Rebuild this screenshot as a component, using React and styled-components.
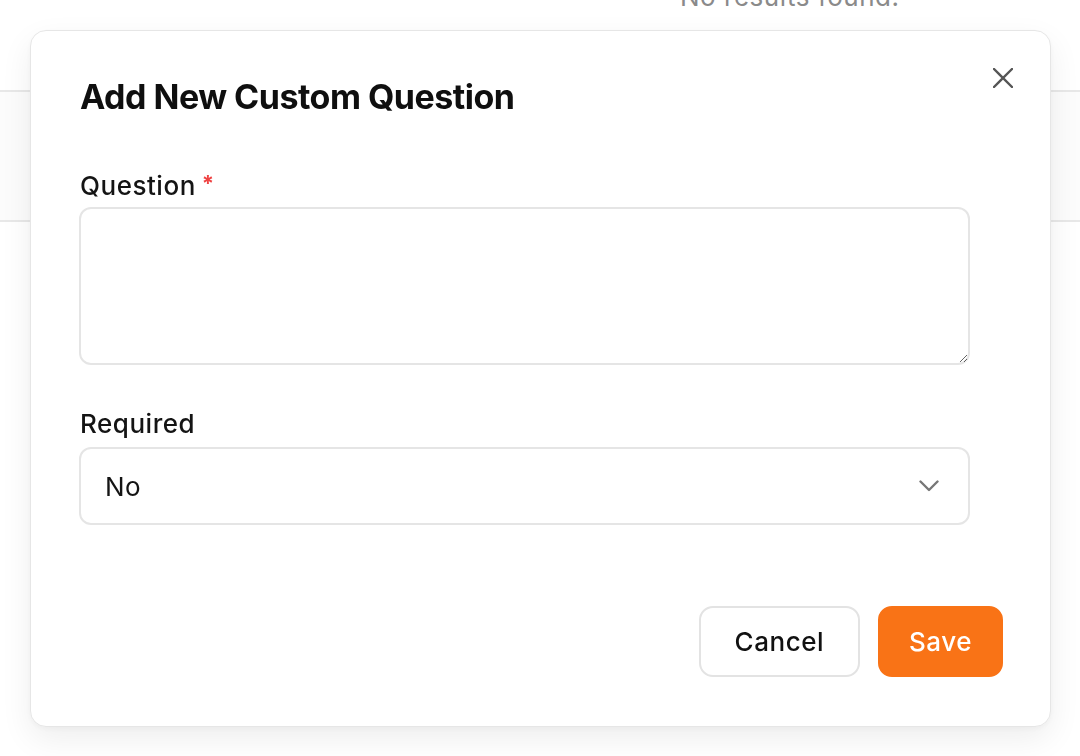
import styled, { createGlobalStyle } from "styled-components";

const GlobalStyle = createGlobalStyle`
  html, body {
    margin: 0;
    padding: 0;
    background: #ffffff;
    font-family: Inter, "Noto Sans", "Liberation Sans", sans-serif;
    color: #111111;
  }
  * {
    box-sizing: border-box;
  }
`;

const CloseIcon = () => (
  <svg width="20" height="20" viewBox="0 0 20 20" fill="none">
    <path
      d="M1 1L19 19M19 1L1 19"
      stroke="#555555"
      strokeWidth="2.4"
      strokeLinecap="round"
    />
  </svg>
);

const ChevronIcon = () => (
  <svg width="20" height="12" viewBox="0 0 20 12" fill="none">
    <path
      d="M1.5 1.5L10 10L18.5 1.5"
      stroke="#777777"
      strokeWidth="2.4"
      strokeLinecap="round"
      strokeLinejoin="round"
    />
  </svg>
);

export default function App() {
  return (
    <>
      <GlobalStyle />
      <Page>
        <Header>
          <EmptyText>No results found.</EmptyText>
        </Header>
        <Band />
      </Page>

      <Modal role="dialog" aria-labelledby="modal-title">
        <CloseButton aria-label="Close">
          <CloseIcon />
        </CloseButton>
        <Title id="modal-title">Add New Custom Question</Title>

        <Field $gap={51}>
          <Label htmlFor="question" $gap={3}>
            Question<Star>*</Star>
          </Label>
          <TextArea id="question" />
        </Field>

        <Field $gap={41}>
          <Label htmlFor="required" $gap={5}>
            Required
          </Label>
          <SelectWrap>
            <Select id="required" defaultValue="no">
              <option value="no">No</option>
              <option value="yes">Yes</option>
            </Select>
            <Chevron>
              <ChevronIcon />
            </Chevron>
          </SelectWrap>
        </Field>

        <Footer>
          <Button $pad={34}>Cancel</Button>
          <Button $pad={29} $primary>
            Save
          </Button>
        </Footer>
      </Modal>
    </>
  );
}

const Page = styled.div`
  display: flex;
  flex-direction: column;
  min-height: 756px;
`;

const Header = styled.div`
  height: 90px;
  display: flex;
  flex-direction: column;
  padding-left: 680px;
`;

const EmptyText = styled.p`
  margin: -21px 0 0;
  font-size: 26px;
  line-height: 36px;
  letter-spacing: 0.02em;
  color: #8a8a8a;
`;

const Band = styled.div`
  height: 132px;
  border-top: 2px solid #e8e8e8;
  border-bottom: 2px solid #e8e8e8;
  background: #fcfcfc;
`;

const Modal = styled.div`
  position: fixed;
  top: 30px;
  left: 30px;
  width: 1021px;
  background: #ffffff;
  border: 1px solid #e6e6e6;
  border-radius: 16px;
  box-shadow: 0 12px 32px rgba(0, 0, 0, 0.07), 0 2px 6px rgba(0, 0, 0, 0.04);
  padding: 46px 47px 49px 48px;
  display: flex;
  flex-direction: column;
`;

const CloseButton = styled.button`
  position: absolute;
  top: 37px;
  right: 37px;
  padding: 0;
  border: none;
  background: none;
  cursor: pointer;
  display: flex;
`;

const Title = styled.h2`
  margin: 0;
  padding-left: 1px;
  font-size: 34px;
  line-height: 40px;
  font-weight: 700;
  letter-spacing: -0.015em;
  color: #0f0f0f;
`;

const Field = styled.div`
  display: flex;
  flex-direction: column;
  width: 891px;
  margin-top: ${(p) => p.$gap}px;
`;

const Label = styled.label`
  display: block;
  padding-left: 1px;
  font-size: 26px;
  line-height: 36px;
  font-weight: 500;
  letter-spacing: 0.02em;
  color: #141414;
  margin-bottom: ${(p) => p.$gap}px;
`;

const Star = styled.span`
  color: #ef4444;
  font-size: 22px;
  font-weight: 700;
  line-height: 0;
  margin-left: 6px;
  vertical-align: 4px;
`;

const TextArea = styled.textarea`
  display: block;
  width: 100%;
  height: 158px;
  border: 2px solid #e5e5e5;
  border-radius: 12px;
  padding: 16px 24px;
  font: inherit;
  font-size: 26px;
  resize: vertical;
  outline: none;
`;

const SelectWrap = styled.div`
  position: relative;
`;

const Select = styled.select`
  appearance: none;
  width: 100%;
  height: 78px;
  border: 2px solid #e5e5e5;
  border-radius: 12px;
  background: #ffffff;
  padding: 0 60px 0 24px;
  font-family: inherit;
  font-size: 26px;
  letter-spacing: 0.02em;
  color: #141414;
  outline: none;
`;

const Chevron = styled.span`
  position: absolute;
  right: 31px;
  top: 50%;
  transform: translateY(-50%);
  display: flex;
  pointer-events: none;
`;

const Footer = styled.div`
  display: flex;
  justify-content: flex-end;
  gap: 18px;
  margin-top: 81px;
`;

const Button = styled.button`
  height: 71px;
  padding: 0 ${(p) => p.$pad}px;
  border-radius: 14px;
  border: 2px solid ${(p) => (p.$primary ? "#f97316" : "#e3e3e3")};
  background: ${(p) => (p.$primary ? "#f97316" : "#ffffff")};
  color: ${(p) => (p.$primary ? "#ffffff" : "#111111")};
  font-family: inherit;
  font-size: 26px;
  font-weight: 500;
  letter-spacing: 0.02em;
  cursor: pointer;
`;
